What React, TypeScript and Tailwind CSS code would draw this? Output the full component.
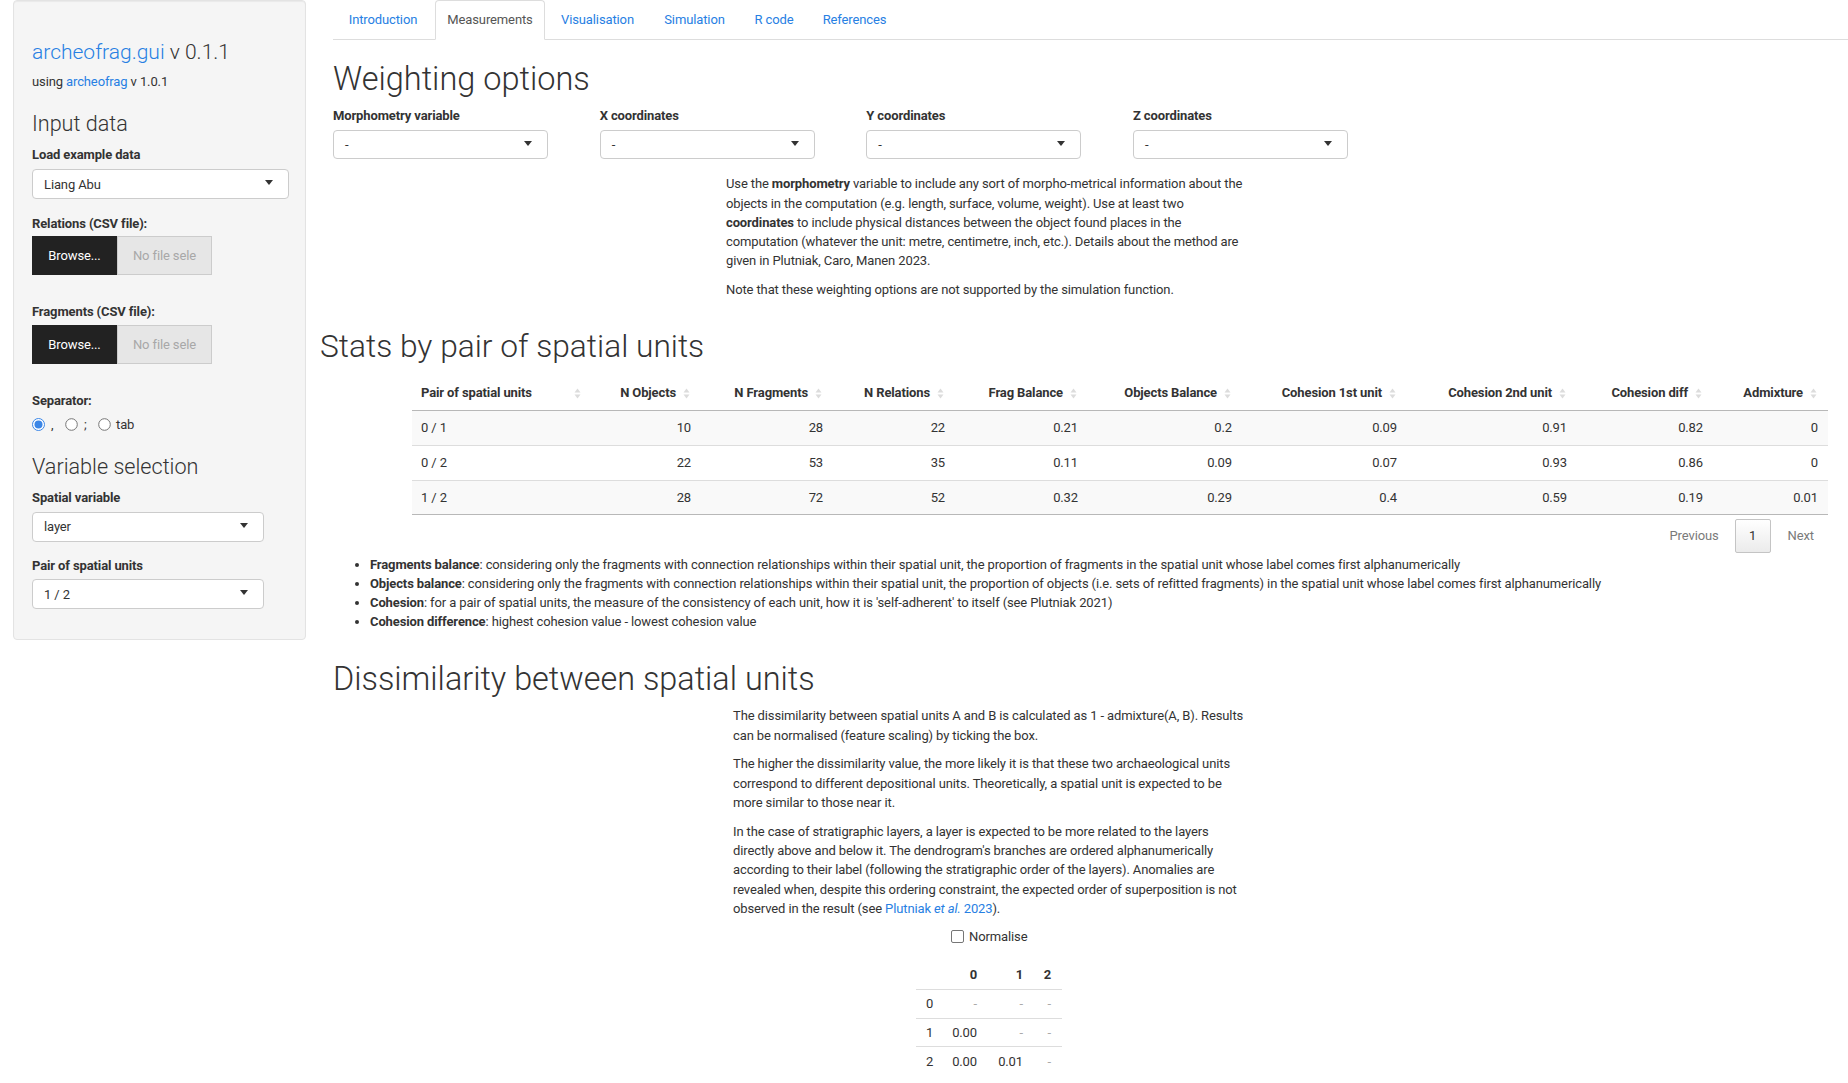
import React from "react";

const Caret = () => (
  <span className="mb-[3px] w-0 h-0 border-l-[4px] border-r-[4px] border-t-[5px] border-l-transparent border-r-transparent border-t-[#333]" />
);

const Sort = () => (
  <svg width="7" height="13" viewBox="0 0 7 13" className="shrink-0">
    <path d="M0.5 5.5 L3.5 1.5 L6.5 5.5Z" fill="#dcdcdc" />
    <path d="M0.5 7.5 L3.5 11.5 L6.5 7.5Z" fill="#dcdcdc" />
  </svg>
);

const Radio = ({ checked }: { checked?: boolean }) =>
  checked ? (
    <svg width="13" height="13" viewBox="0 0 13 13" className="shrink-0">
      <circle cx="6.5" cy="6.5" r="6" fill="#fff" stroke="#3b86e6" strokeWidth="1" />
      <circle cx="6.5" cy="6.5" r="4" fill="#3b86e6" />
    </svg>
  ) : (
    <svg width="13" height="13" viewBox="0 0 13 13" className="shrink-0">
      <circle cx="6.5" cy="6.5" r="5.8" fill="#fff" stroke="#767676" strokeWidth="1" />
    </svg>
  );

const tabs = [
  { label: "Introduction", cls: "w-[100px]" },
  { label: "Measurements", cls: "w-[110px]", active: true },
  { label: "Visualisation", cls: "w-[101px]" },
  { label: "Simulation", cls: "w-[89px]" },
  { label: "R code", cls: "w-[66px]" },
  { label: "References", cls: "w-[91px]" },
];

const headers = [
  "Pair of spatial units",
  "N Objects",
  "N Fragments",
  "N Relations",
  "Frag Balance",
  "Objects Balance",
  "Cohesion 1st unit",
  "Cohesion 2nd unit",
  "Cohesion diff",
  "Admixture",
];

const rows = [
  ["0 / 1", "10", "28", "22", "0.21", "0.2", "0.09", "0.91", "0.82", "0"],
  ["0 / 2", "22", "53", "35", "0.11", "0.09", "0.07", "0.93", "0.86", "0"],
  ["1 / 2", "28", "72", "52", "0.32", "0.29", "0.4", "0.59", "0.19", "0.01"],
];

const rowH = ["h-[35px]", "h-[35px]", "h-[34px]"];

const gridCols =
  "grid grid-cols-[180px_109px_132px_122px_133px_154px_165px_170px_136px_115px]";

export default function App() {
  return (
    <div className="w-[1848px] h-[1083px] overflow-hidden bg-white text-[#333] text-[13px] leading-[19.3px] tracking-[-0.12px] [font-family:Roboto,sans-serif] flex items-start">
      {/* Sidebar */}
      <aside className="ml-[13px] w-[293px] h-[640px] shrink-0 bg-[#f5f5f5] border border-[#e3e3e3] rounded-[4px] shadow-[inset_0_1px_1px_rgba(0,0,0,0.05)] pt-[19px] pl-[18px] flex flex-col">
        <div className="mt-[19.5px] text-[21px] leading-[24px] font-light tracking-normal whitespace-nowrap">
          <span className="text-[#2780e3]">archeofrag.gui</span> v 0.1.1
        </div>
        <div className="mt-[8.4px] whitespace-nowrap">
          using <span className="text-[#2780e3]">archeofrag</span> v 1.0.1
        </div>
        <div className="mt-[20.2px] text-[21.6px] leading-[25px] font-light tracking-normal">Input data</div>
        <div className="mt-[8.6px] font-bold">Load example data</div>
        <div className="mt-[5.1px] w-[257px] h-[30px] flex items-center justify-between bg-white border border-[#ccc] rounded-[4px] pl-[11px] pr-[15px]">
          <span>Liang Abu</span>
          <Caret />
        </div>
        <div className="mt-[14.3px] font-bold">Relations (CSV file):</div>
        <div className="mt-[3.1px] flex h-[39px]">
          <div className="w-[85px] h-full bg-[#222] text-white flex items-center justify-center">Browse...</div>
          <div className="w-[95px] h-full bg-[#e6e6e6] border border-[#ccc] text-[#a8a8a8] flex items-center justify-center overflow-hidden whitespace-nowrap">
            No file sele
          </div>
        </div>
        <div className="mt-[26.9px] font-bold">Fragments (CSV file):</div>
        <div className="mt-[3.8px] flex h-[39px]">
          <div className="w-[85px] h-full bg-[#222] text-white flex items-center justify-center">Browse...</div>
          <div className="w-[95px] h-full bg-[#e6e6e6] border border-[#ccc] text-[#a8a8a8] flex items-center justify-center overflow-hidden whitespace-nowrap">
            No file sele
          </div>
        </div>
        <div className="mt-[27.2px] font-bold">Separator:</div>
        <div className="mt-[4.7px] flex items-center">
          <div className="w-[33px] flex items-center gap-[6px]">
            <Radio checked />
            <span>,</span>
          </div>
          <div className="w-[33px] flex items-center gap-[6px]">
            <Radio />
            <span>;</span>
          </div>
          <div className="flex items-center gap-[5px]">
            <Radio />
            <span>tab</span>
          </div>
        </div>
        <div className="mt-[19.1px] text-[21.6px] leading-[25px] font-light tracking-normal">Variable selection</div>
        <div className="mt-[9px] font-bold">Spatial variable</div>
        <div className="mt-[4.8px] w-[232px] h-[30px] flex items-center justify-between bg-white border border-[#ccc] rounded-[4px] pl-[11px] pr-[15px]">
          <span>layer</span>
          <Caret />
        </div>
        <div className="mt-[14.2px] font-bold">Pair of spatial units</div>
        <div className="mt-[4.1px] w-[232px] h-[30px] flex items-center justify-between bg-white border border-[#ccc] rounded-[4px] pl-[11px] pr-[15px]">
          <span>1 / 2</span>
          <Caret />
        </div>
      </aside>

      {/* Main */}
      <main className="ml-[27px] flex-1 min-w-0 flex flex-col">
        <nav className="flex h-[40px] border-b border-[#ddd]">
          {tabs.map((t) =>
            t.active ? (
              <div
                key={t.label}
                className={`${t.cls} h-[40px] mr-[2px] flex items-center justify-center border border-[#ddd] border-b-white rounded-t-[4px] bg-white text-[#555] whitespace-nowrap`}
              >
                {t.label}
              </div>
            ) : (
              <div
                key={t.label}
                className={`${t.cls} h-[39px] mr-[2px] flex items-center justify-center text-[#2780e3] whitespace-nowrap`}
              >
                {t.label}
              </div>
            )
          )}
        </nav>

        <h1 className="mt-[22px] text-[32.5px] leading-[35px] font-light tracking-normal whitespace-nowrap">
          Weighting options
        </h1>

        <div className="mt-[9px] flex">
          {["Morphometry variable", "X coordinates", "Y coordinates", "Z coordinates"].map((l) => (
            <div key={l} className="w-[266.67px] shrink-0 flex flex-col">
              <div className="font-bold whitespace-nowrap">{l}</div>
              <div className="mt-[5px] w-[215px] h-[29px] flex items-center justify-between bg-white border border-[#ccc] rounded-[4px] pl-[11px] pr-[15px]">
                <span>-</span>
                <Caret />
              </div>
            </div>
          ))}
        </div>

        <div className="mt-[15px] ml-[393px] whitespace-nowrap">
          <p className="mb-[9px]">
            Use the <b>morphometry</b> variable to include any sort of morpho-metrical information about the
            <br />
            objects in the computation (e.g. length, surface, volume, weight). Use at least two
            <br />
            <b>coordinates</b> to include physical distances between the object found places in the
            <br />
            computation (whatever the unit: metre, centimetre, inch, etc.). Details about the method are
            <br />
            given in Plutniak, Caro, Manen 2023.
          </p>
          <p>Note that these weighting options are not supported by the simulation function.</p>
        </div>

        <h1 className="mt-[29.5px] -ml-[13px] text-[31.7px] leading-[35px] font-light tracking-normal whitespace-nowrap">
          Stats by pair of spatial units
        </h1>

        {/* Stats table */}
        <div className="mt-[12.5px] ml-[79px] w-[1416px]">
          <div className={`${gridCols} h-[35px] border-b border-[#b8b8b8] font-bold items-center`}>
            {headers.map((h, i) =>
              i === 0 ? (
                <div key={h} className="flex items-center justify-between pl-[9px] pr-[11px] whitespace-nowrap">
                  <span>{h}</span>
                  <Sort />
                </div>
              ) : (
                <div key={h} className="flex items-center justify-end gap-[7px] pr-[11px] whitespace-nowrap">
                  <span>{h}</span>
                  <Sort />
                </div>
              )
            )}
          </div>
          {rows.map((r, ri) => (
            <div
              key={ri}
              className={`${gridCols} ${rowH[ri]} items-center border-b ${
                ri === 2 ? "border-[#b8b8b8]" : "border-[#ddd]"
              } ${ri % 2 === 0 ? "bg-[#f9f9f9]" : "bg-white"}`}
            >
              {r.map((c, ci) =>
                ci === 0 ? (
                  <div key={ci} className="pl-[9px] whitespace-nowrap">
                    {c}
                  </div>
                ) : (
                  <div key={ci} className="pr-[10px] text-right whitespace-nowrap">
                    {c}
                  </div>
                )
              )}
            </div>
          ))}
        </div>

        <div className="mt-[4px] ml-[79px] w-[1416px] flex justify-end items-center pr-[14px]">
          <span className="text-[#7a7a7a] mr-[16px]">Previous</span>
          <span className="w-[36px] h-[34px] border border-[#c4c4c4] rounded-[2px] bg-[linear-gradient(to_bottom,#ffffff,#ebebeb)] flex items-center justify-center">
            1
          </span>
          <span className="text-[#7a7a7a] ml-[17px]">Next</span>
        </div>

        <ul className="mt-[2.3px] list-disc pl-[37px] leading-[19px] whitespace-nowrap">
          <li>
            <b>Fragments balance</b>: considering only the fragments with connection relationships within their spatial
            unit, the proportion of fragments in the spatial unit whose label comes first alphanumerically
          </li>
          <li>
            <b>Objects balance</b>: considering only the fragments with connection relationships within their spatial
            unit, the proportion of objects (i.e. sets of refitted fragments) in the spatial unit whose label comes
            first alphanumerically
          </li>
          <li>
            <b>Cohesion</b>: for a pair of spatial units, the measure of the consistency of each unit, how it is
            'self-adherent' to itself (see Plutniak 2021)
          </li>
          <li>
            <b>Cohesion difference</b>: highest cohesion value - lowest cohesion value
          </li>
        </ul>

        <h1 className="mt-[30.5px] text-[32.4px] leading-[35px] font-light tracking-normal whitespace-nowrap">
          Dissimilarity between spatial units
        </h1>

        <div className="mt-[9.5px] ml-[400px] whitespace-nowrap">
          <p className="mb-[9.5px]">
            The dissimilarity between spatial units A and B is calculated as 1 - admixture(A, B). Results
            <br />
            can be normalised (feature scaling) by ticking the box.
          </p>
          <p className="mb-[9.5px]">
            The higher the dissimilarity value, the more likely it is that these two archaeological units
            <br />
            correspond to different depositional units. Theoretically, a spatial unit is expected to be
            <br />
            more similar to those near it.
          </p>
          <p>
            In the case of stratigraphic layers, a layer is expected to be more related to the layers
            <br />
            directly above and below it. The dendrogram's branches are ordered alphanumerically
            <br />
            according to their label (following the stratigraphic order of the layers). Anomalies are
            <br />
            revealed when, despite this ordering constraint, the expected order of superposition is not
            <br />
            observed in the result (see{" "}
            <span className="text-[#2780e3]">
              Plutniak <i>et al.</i> 2023
            </span>
            ).
          </p>
        </div>

        <div className="mt-[9px] ml-[618px] flex items-center gap-[5px]">
          <span className="w-[13px] h-[13px] border border-[#767676] rounded-[2px] bg-white shrink-0" />
          <span>Normalise</span>
        </div>

        {/* Dissimilarity table */}
        <div className="mt-[13.4px] ml-[583px] w-[146px]">
          <div className="grid grid-cols-[31px_38px_46px_31px] h-[30px] items-center border-b border-[#ddd] font-bold">
            <div />
            <div className="text-right pr-[8px]">0</div>
            <div className="text-right pr-[8px]">1</div>
            <div className="text-right pr-[11px]">2</div>
          </div>
          {[
            ["0", "-", "-", "-"],
            ["1", "0.00", "-", "-"],
            ["2", "0.00", "0.01", "-"],
          ].map((r, ri) => (
            <div
              key={ri}
              className={`grid grid-cols-[31px_38px_46px_31px] h-[28.5px] items-center ${
                ri < 2 ? "border-b border-[#ddd]" : ""
              }`}
            >
              <div className="pl-[10px]">{r[0]}</div>
              {r.slice(1).map((v, vi) => (
                <div
                  key={vi}
                  className={`text-right ${vi === 2 ? "pr-[11px]" : "pr-[8px]"} ${
                    v === "-" ? "text-[#aaa]" : ""
                  }`}
                >
                  {v}
                </div>
              ))}
            </div>
          ))}
        </div>
      </main>
    </div>
  );
}
